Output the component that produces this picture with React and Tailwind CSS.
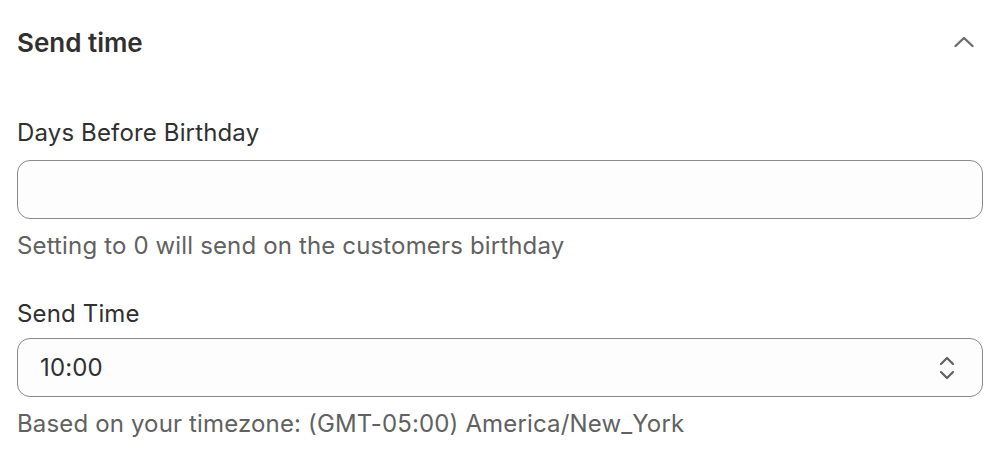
const App = () => {
  return (
    <div className="w-[1000px] h-[463px] bg-white text-[#303030] px-[17px] font-['Inter',sans-serif] tracking-[0.15px] overflow-hidden">
      <div className="flex items-center justify-between h-[84px]">
        <h2 className="text-[26px] font-semibold tracking-normal">Send time</h2>
        <svg className="w-[24px] h-[24px] mr-[7px] text-[#6b6b6b]" viewBox="0 0 24 24" fill="none" stroke="currentColor" strokeWidth={2.4} strokeLinecap="round" strokeLinejoin="round">
          <path d="M3.5 16l8.5-8 8.5 8" />
        </svg>
      </div>

      <div className="mt-[30px]">
        <label className="block text-[24px] leading-[38px]">Days Before Birthday</label>
        <input
          type="text"
          className="mt-[8px] block w-full h-[59px] rounded-[13px] border border-[#8a8a8a] bg-[#fdfdfd] px-[22px] text-[24px] outline-none"
        />
        <p className="mt-[8px] text-[24px] leading-[38px] text-[#616161]">Setting to 0 will send on the customers birthday</p>
      </div>

      <div className="mt-[30px]">
        <label className="block text-[24px] leading-[38px]">Send Time</label>
        <div className="mt-[5px] flex items-center justify-between w-full h-[59px] rounded-[13px] border border-[#8a8a8a] bg-[#fdfdfd] pl-[22px] pr-[24px]">
          <span className="text-[24px]">10:00</span>
          <svg className="w-[22px] h-[28px] text-[#616161]" viewBox="0 0 22 28" fill="none" stroke="currentColor" strokeWidth={2.2} strokeLinecap="round" strokeLinejoin="round">
            <path d="M5 10l6-6 6 6" />
            <path d="M5 18l6 6 6-6" />
          </svg>
        </div>
        <p className="mt-[8px] text-[24px] leading-[38px] text-[#616161]">Based on your timezone: (GMT-05:00) America/New_York</p>
      </div>
    </div>
  );
};

export default App;
